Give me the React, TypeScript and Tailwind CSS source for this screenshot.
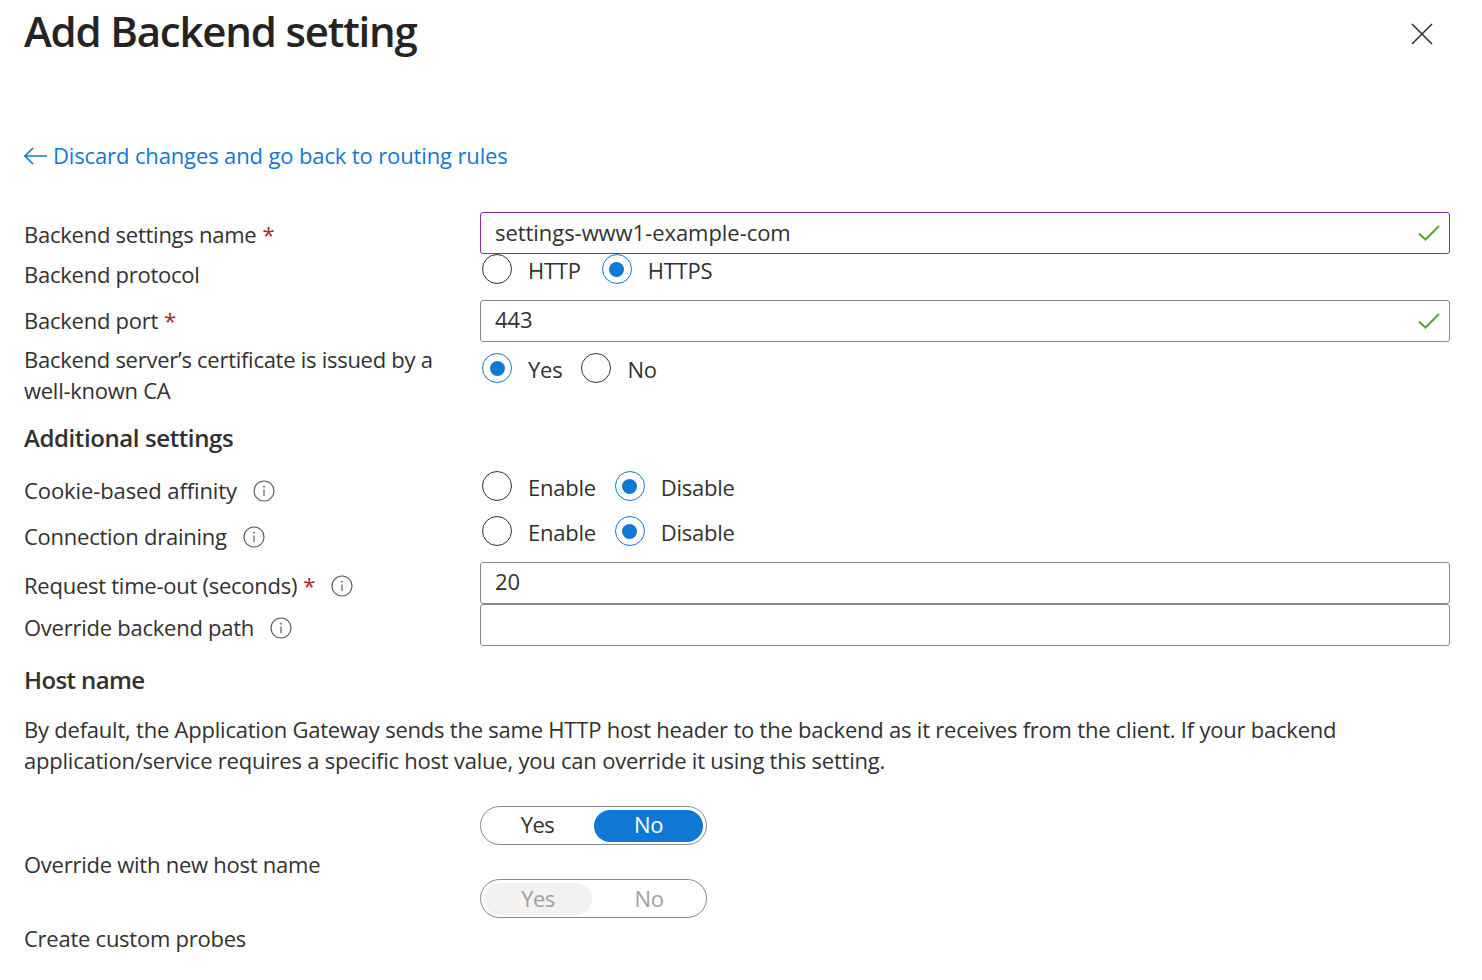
const font = { fontFamily: '"Open Sans", "Noto Sans", sans-serif' };

function Radio({ label, checked, className = '' }: { label: string; checked?: boolean; className?: string }) {
  return (
    <div className={`flex items-center ${className}`}>
      {checked ? (
        <span className="flex h-[30px] w-[30px] items-center justify-center rounded-full border border-[#0f78d4]">
          <span className="h-[15px] w-[15px] rounded-full bg-[#0f78d4]" />
        </span>
      ) : (
        <span className="h-[30px] w-[30px] rounded-full border border-[#323130]" />
      )}
      <span className="ml-[16px] mt-[1px] text-[22px] leading-[30px] tracking-[-0.25px] text-[#323130]">{label}</span>
    </div>
  );
}

function Info() {
  return (
    <svg className="ml-[16px] shrink-0" width="22" height="22" viewBox="0 0 22 22" fill="none">
      <circle cx="11" cy="11" r="10" stroke="#605e5c" strokeWidth="1.2" />
      <path d="M11 9.5V16" stroke="#605e5c" strokeWidth="1.2" />
      <circle cx="11" cy="6.7" r="0.9" fill="#605e5c" />
    </svg>
  );
}

function Star() {
  return <span className="ml-[6px] text-[#a4262c]">*</span>;
}

function Check() {
  return (
    <svg width="22" height="16" viewBox="0 0 22 16" fill="none">
      <path d="M1 8.5L7.5 14.5L21 1" stroke="#57a32a" strokeWidth="2" />
    </svg>
  );
}

function Field({ value, ok, purple }: { value?: string; ok?: boolean; purple?: boolean }) {
  return (
    <div
      className={`flex h-[42px] w-[970px] items-center justify-between rounded-[3px] border pl-[14px] pr-[9px] text-[22px] tracking-[-0.05px] text-[#323130] ${
        purple ? 'border-[#8a2da5]' : 'border-[#8a8886]'
      }`}
    >
      <span className={purple ? 'pb-[2px]' : 'pb-[3px]'}>{value}</span>
      {ok && <Check />}
    </div>
  );
}

function Label({ children }: { children: React.ReactNode }) {
  return (
    <div className="flex w-[456px] shrink-0 items-center text-[22px] leading-[31px] tracking-[-0.25px] text-[#323130]">
      {children}
    </div>
  );
}

function Toggle({ disabled }: { disabled?: boolean }) {
  return (
    <div className="relative flex h-[39px] w-[227px] items-center rounded-full border border-[#8a8886] text-[22px] tracking-[-0.5px]">
      {disabled ? (
        <>
          <span className="ml-[3px] flex h-[32px] w-[108px] items-center justify-center rounded-full bg-[#f3f2f1] text-[#a19f9d]">Yes</span>
          <span className="flex h-[32px] w-[114px] items-center justify-center text-[#a19f9d]">No</span>
        </>
      ) : (
        <>
          <span className="flex h-[32px] w-[113px] items-center justify-center pb-[2px] text-[#323130]">Yes</span>
          <span className="flex h-[32px] w-[109px] items-center justify-center rounded-full bg-[#0f78d4] pb-[2px] text-white">No</span>
        </>
      )}
    </div>
  );
}

export default function App() {
  return (
    <div className="h-[980px] w-[1482px] overflow-hidden bg-white pl-[24px] pr-[32px]" style={font}>
      <div className="flex h-[64px] items-center justify-between">
        <h1 className="mb-[2px] text-[42px] font-semibold leading-[62px] tracking-[-1.2px] text-[#252423]">Add Backend setting</h1>
        <svg className="mr-[17px] mt-[3px]" width="22" height="22" viewBox="0 0 22 22" fill="none">
          <path d="M1 1L21 21M21 1L1 21" stroke="#323130" strokeWidth="1.6" />
        </svg>
      </div>

      <div className="mt-[76px] flex h-[32px] items-center text-[22px] tracking-[-0.13px] text-[#0f78d4]">
        <svg className="mr-[5px]" width="24" height="18" viewBox="0 0 24 18" fill="none">
          <path d="M9 1L1 9L9 17M1 9H23" stroke="#0f78d4" strokeWidth="1.6" />
        </svg>
        <span className="pb-[2px]">Discard changes and go back to routing rules</span>
      </div>

      <div className="mt-[40px] flex h-[43px]">
        <div className="pt-[7px]">
          <Label>Backend settings name<Star /></Label>
        </div>
        <Field value="settings-www1-example-com" ok purple />
      </div>
      <div className="flex h-[45px]">
        <div className="pt-[4px]">
          <Label>Backend protocol</Label>
        </div>
        <div className="-mt-[1px] flex h-[30px] pl-[2px]">
          <Radio label="HTTP" />
          <Radio label="HTTPS" checked className="ml-[21px]" />
        </div>
      </div>
      <div className="flex h-[53px]">
        <div className="pt-[5px]">
          <Label>Backend port<Star /></Label>
        </div>
        <Field value="443" ok />
      </div>
      <div className="flex h-[69px]">
        <div className="-mt-[9px] w-[456px] shrink-0 pr-[20px] text-[22px] leading-[31px] tracking-[-0.27px] text-[#323130]">
          Backend server’s certificate is issued by a well-known CA
        </div>
        <div className="flex h-[30px] pl-[2px]">
          <Radio label="Yes" checked />
          <Radio label="No" className="ml-[19px]" />
        </div>
      </div>

      <h2 className="h-[50px] text-[24px] font-semibold leading-[32px] tracking-[-0.4px] text-[#323130]">Additional settings</h2>

      <div className="flex h-[45px]">
        <div className="pt-[3px]">
          <Label><span className="tracking-[-0.1px]">Cookie-based affinity</span><Info /></Label>
        </div>
        <div className="-mt-[1px] flex h-[30px] pl-[2px]">
          <Radio label="Enable" />
          <Radio label="Disable" checked className="ml-[19px]" />
        </div>
      </div>
      <div className="flex h-[45px]">
        <div className="pt-[4px]">
          <Label>Connection draining<Info /></Label>
        </div>
        <div className="-mt-[1px] flex h-[30px] pl-[2px]">
          <Radio label="Enable" />
          <Radio label="Disable" checked className="ml-[19px]" />
        </div>
      </div>
      <div className="flex h-[42px]">
        <div className="pt-[8px]">
          <Label>Request time-out (seconds)<Star /><Info /></Label>
        </div>
        <Field value="20" />
      </div>
      <div className="flex h-[42px]">
        <div className="pt-[8px]">
          <Label>Override backend path<Info /></Label>
        </div>
        <Field />
      </div>

      <h2 className="mt-[18px] h-[50px] text-[24px] font-semibold leading-[32px] tracking-[-0.6px] text-[#323130]">Host name</h2>
      <p className="text-[22px] leading-[31px] tracking-[-0.22px] text-[#323130]">
        By default, the Application Gateway sends the same HTTP host header to the backend as it receives from the client. If your backend application/service requires a specific host value, you can override it using this setting.
      </p>

      <div className="mt-[30px] flex h-[73px]">
        <div className="-mb-[1px] flex w-[456px] shrink-0 items-end">
          <Label>Override with new host name</Label>
        </div>
        <Toggle />
      </div>
      <div className="flex h-[74px]">
        <div className="-mb-[1px] flex w-[456px] shrink-0 items-end">
          <Label>Create custom probes</Label>
        </div>
        <Toggle disabled />
      </div>
    </div>
  );
}
